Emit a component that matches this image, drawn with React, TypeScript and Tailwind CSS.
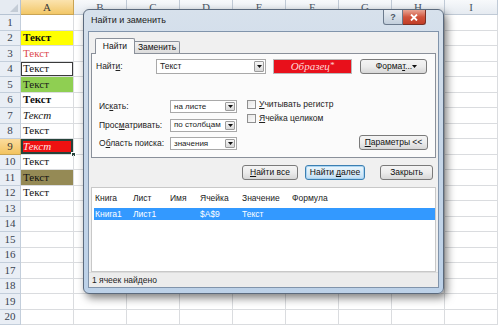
import React from 'react';

const COLS = ['A', 'B', 'C', 'D', 'E', 'F', 'G', 'H', 'I'];

type CellDef = { cls: string; text?: string; selected?: boolean };

const A_CELLS: CellDef[] = [
  { cls: '' },
  { cls: 'bg-[#ffff00] font-bold text-[#111]', text: 'Текст' },
  { cls: 'text-[#dd4a4f]', text: 'Текст' },
  { cls: 'shadow-[inset_0_0_0_1px_#3a3a3a] text-[#111]', text: 'Текст' },
  { cls: 'bg-[#8fcf52] text-[#1a1a1a]', text: 'Текст' },
  { cls: 'font-bold text-[#111]', text: 'Текст' },
  { cls: 'italic text-[#111]', text: 'Текст' },
  { cls: 'text-[#111]', text: 'Текст' },
  { cls: 'bg-[#ee1111] italic text-[#ffe4e4] shadow-[inset_0_0_0_2px_#27433a]', text: 'Текст', selected: true },
  { cls: 'text-[#111]', text: 'Текст' },
  { cls: 'bg-[#958a55] text-[#111]', text: 'Текст' },
  { cls: 'text-[#111]', text: 'Текст' },
  { cls: '' },
  { cls: '' },
  { cls: '' },
  { cls: '' },
  { cls: '' },
  { cls: '' },
  { cls: '' },
  { cls: '' },
];

function Sheet() {
  return (
    <div className="w-[500px] h-[325px] bg-white font-['Liberation_Serif',serif]">
      <div className="flex h-[15px]">
        <div className="w-[21px] shrink-0 bg-[#e6ebf2] border-r border-b border-[#b6c3d3] relative">
          <svg className="absolute right-[2px] bottom-[2px]" width="8" height="8" viewBox="0 0 8 8">
            <path d="M8 0V8H0Z" fill="#c4ccd6" />
          </svg>
        </div>
        {COLS.map((c) => (
          <div
            key={c}
            className={`w-[53px] shrink-0 h-full flex items-center justify-center text-[11px] leading-none border-r border-b ${
              c === 'A'
                ? 'bg-gradient-to-b from-[#fbe3ae] to-[#f2c766] border-[#c9a454] text-[#3b3b3b]'
                : 'bg-gradient-to-b from-[#f7f9fb] to-[#e6ebf1] border-[#c0cad6] text-[#4a5766]'
            }`}
          >
            {c}
          </div>
        ))}
      </div>
      {A_CELLS.map((cell, i) => {
        const n = i + 1;
        return (
          <div key={n} className="flex h-[15.5px]">
            <div
              className={`w-[21px] shrink-0 h-full flex items-center justify-center text-[11px] leading-none border-r border-b ${
                n === 9
                  ? 'bg-gradient-to-b from-[#fbdc9c] to-[#f3c35e] border-[#c9a454] text-[#333]'
                  : 'bg-[#e9eef5] border-[#c3cedb] text-[#3a4350]'
              }`}
            >
              {n}
            </div>
            <div
              className={`relative w-[53px] shrink-0 h-full border-r border-b border-[#dadcdf] flex items-center pl-[2px] text-[11px] leading-none ${cell.cls}`}
            >
              {cell.text}
              {cell.selected && (
                <div className="absolute right-[-3px] bottom-[-3px] w-[5px] h-[5px] bg-[#27433a] border border-white" />
              )}
            </div>
            {COLS.slice(1).map((c) => (
              <div key={c} className="w-[53px] shrink-0 h-full border-r border-b border-[#dadcdf]" />
            ))}
          </div>
        );
      })}
    </div>
  );
}

const DropBtn = () => (
  <div className="w-[10px] my-[1px] mr-[1px] bg-gradient-to-b from-[#f6f6f6] to-[#d8d8d8] border border-[#9c9c9c] rounded-[1px] flex items-center justify-center shrink-0">
    <svg width="5" height="3" viewBox="0 0 5 3">
      <path d="M0 0H5L2.5 3Z" fill="#111" />
    </svg>
  </div>
);

function Combo({ text, cls }: { text: string; cls: string }) {
  return (
    <div className={`flex bg-white border border-[#a9a9a9] ${cls}`}>
      <div className="flex-1 min-w-0 overflow-hidden whitespace-nowrap flex items-center pl-[3px] text-[8px] text-[#222] leading-none">
        {text}
      </div>
      <DropBtn />
    </div>
  );
}

function Btn({ children, cls }: { children: React.ReactNode; cls: string }) {
  return (
    <div
      className={`h-[15px] rounded-[3px] border flex items-center justify-center text-[8.5px] leading-none text-[#111] ${cls}`}
    >
      {children}
    </div>
  );
}

function CheckRow({ children }: { children: React.ReactNode }) {
  return (
    <div className="flex items-center h-[14px] gap-[3px]">
      <div className="w-[9px] h-[9px] border border-[#8f8f8f] bg-gradient-to-br from-[#e6e6e6] to-[#fbfbfb]" />
      <span className="text-[8.5px] leading-none text-[#222]">{children}</span>
    </div>
  );
}

function Dialog() {
  return (
    <div className="absolute left-[83px] top-[9px] w-[361px] h-[285px] rounded-[6px] border border-[#5b6a7d] bg-gradient-to-b from-[#d7e1ec] via-[#c6d6e8] to-[#bcd1e8] shadow-[3px_4px_9px_rgba(0,0,0,0.5)] flex flex-col px-[4px] pb-[5px] font-['Liberation_Sans',Arial,sans-serif]">
      <div className="h-[21px] flex justify-between items-start shrink-0">
        <div className="pl-[3px] pt-[6px] text-[9px] leading-none text-[#1b1b1b]">Найти и заменить</div>
        <div className="flex mr-[13px]">
          <div className="w-[20px] h-[15px] rounded-bl-[3px] border border-t-0 border-[#6b7a8d] bg-gradient-to-b from-[#e9eef4] to-[#c3cfdc] flex items-center justify-center text-[9px] font-bold text-[#4a5563] leading-none">
            ?
          </div>
          <div className="w-[23px] h-[15px] rounded-br-[3px] border border-l-0 border-t-0 border-[#7a3024] bg-gradient-to-b from-[#e7a494] via-[#d0533c] to-[#c23d25] flex items-center justify-center">
            <svg width="8" height="7" viewBox="0 0 8 7">
              <path d="M1 0.5L7 6.5M7 0.5L1 6.5" stroke="#fff" strokeWidth="1.8" />
            </svg>
          </div>
        </div>
      </div>
      <div className="flex-1 bg-[#f0f0f0] border border-[#8194ab] flex flex-col">
        {/* tabs */}
        <div className="h-[15px] mt-[6px] flex items-end pl-[6px] shrink-0">
          <div className="relative z-10 w-[40px] h-[16px] -mb-[1px] bg-[#fbfbfb] border border-b-0 border-[#8a909a] rounded-t-[2px] flex items-center justify-center text-[8.5px] leading-none text-[#111]">
            Найти
          </div>
          <div className="w-[45px] h-[12px] bg-gradient-to-b from-[#f2f2f2] to-[#dcdcdc] border border-l-0 border-b-0 border-[#8a909a] rounded-tr-[2px] flex items-center justify-center text-[8.5px] leading-none text-[#111]">
            Заменить
          </div>
        </div>
        <div className="h-[105px] mx-[2px] bg-[#fbfbfb] border border-[#8a909a] flex flex-col shrink-0">
          <div className="flex items-center h-[15px] mt-[5px] pl-[4px]">
            <div className="w-[60px] text-[8.5px] leading-none text-[#222]">
              Найт<span className="underline">и</span>:
            </div>
            <div className="w-[110px] h-[15px] flex bg-white border border-[#a9a9a9]">
              <div className="flex-1 flex items-center pl-[3px] text-[8.5px] text-[#222] leading-none">Текст</div>
              <DropBtn />
            </div>
            <div className="ml-[7px] w-[79px] h-[15px] bg-[#e8101b] border border-[#b9b9b9] flex items-center justify-center font-['Liberation_Serif',serif] italic text-[11px] leading-none text-[#ffd6d6]">
              Образец<span className="text-[9px] self-start mt-[1px]">*</span>
            </div>
            <Btn cls="ml-[8px] w-[67px] h-[14px] border-[#7a7a7a] bg-gradient-to-b from-[#f4f4f4] via-[#ececec] to-[#d7d7d7] justify-between px-[3px]">
              <span className="pl-[6px]">
                Форма<span className="underline">т</span>...
              </span>
              <svg width="5" height="3" viewBox="0 0 5 3">
                <path d="M0 0H5L2.5 3Z" fill="#111" />
              </svg>
            </Btn>
          </div>
          <div className="flex mt-[26px] pl-[7px] pr-[7px] flex-1">
            <div className="flex flex-col gap-[5.5px]">
              <div className="flex items-center h-[13px]">
                <div className="w-[71px] text-[8.5px] leading-none text-[#222]">
                  Ис<span className="underline">к</span>ать:
                </div>
                <Combo text="на листе" cls="w-[67px] h-[13px]" />
              </div>
              <div className="flex items-center h-[13px]">
                <div className="w-[71px] text-[8.5px] leading-none text-[#222]">
                  Прос<span className="underline">м</span>атривать:
                </div>
                <Combo text="по столбцам" cls="w-[67px] h-[13px]" />
              </div>
              <div className="flex items-center h-[13px]">
                <div className="w-[71px] text-[8.5px] leading-none text-[#222]">
                  О<span className="underline">б</span>ласть поиска:
                </div>
                <Combo text="значения" cls="w-[67px] h-[13px]" />
              </div>
            </div>
            <div className="ml-[10px] -mt-[3px] flex flex-col">
              <CheckRow>
                <span className="underline">У</span>читывать регистр
              </CheckRow>
              <CheckRow>
                <span className="underline">Я</span>чейка целиком
              </CheckRow>
            </div>
            <div className="flex-1 flex justify-end items-end pb-[7px]">
              <Btn cls="w-[69px] border-[#7a7a7a] bg-gradient-to-b from-[#f4f4f4] via-[#ececec] to-[#d7d7d7]">
                <span className="underline">П</span>араметры &lt;&lt;
              </Btn>
            </div>
          </div>
        </div>
        <div className="flex justify-end mt-[7px] pr-[5px] shrink-0">
          <Btn cls="w-[56px] border-[#7a7a7a] bg-gradient-to-b from-[#f4f4f4] via-[#ececec] to-[#d7d7d7]">
            <span className="underline">Н</span>айти все
          </Btn>
          <Btn cls="ml-[7px] w-[60px] border-[#3c7fb1] bg-gradient-to-b from-[#eaf6fd] via-[#dcecf8] to-[#bfdcf2] shadow-[inset_0_0_0_1px_#a9d4f2]">
            Найти <span className="underline ml-[2px]">д</span>алее
          </Btn>
          <Btn cls="ml-[15px] w-[53px] border-[#7a7a7a] bg-gradient-to-b from-[#f4f4f4] via-[#ececec] to-[#d7d7d7]">
            Закрыть
          </Btn>
        </div>
        <div className="mt-[7px] mx-[2px] h-[85px] bg-white border border-[#c8c8c8] flex flex-col shrink-0">
          <div className="h-[20px] flex items-center pl-[3px] text-[8.5px] leading-none text-[#222]">
            <div className="w-[38px]">Книга</div>
            <div className="w-[37px]">Лист</div>
            <div className="w-[30px]">Имя</div>
            <div className="w-[42px]">Ячейка</div>
            <div className="w-[50px]">Значение</div>
            <div>Формула</div>
          </div>
          <div className="h-[12px] ml-[2px] bg-[#3399ff] flex items-center pl-[1px] text-[8.5px] leading-none text-white">
            <div className="w-[38px]">Книга1</div>
            <div className="w-[37px]">Лист1</div>
            <div className="w-[30px]"></div>
            <div className="w-[42px]">$A$9</div>
            <div className="w-[50px]">Текст</div>
          </div>
        </div>
        <div className="flex-1 flex items-center pl-[3px] text-[8.5px] leading-none text-[#222] bg-[#ececec] border-t border-[#dcdcdc]">
          1 ячеек найдено
        </div>
      </div>
    </div>
  );
}

export default function App() {
  return (
    <div className="relative w-[500px] h-[325px] overflow-hidden">
      <Sheet />
      <Dialog />
    </div>
  );
}
